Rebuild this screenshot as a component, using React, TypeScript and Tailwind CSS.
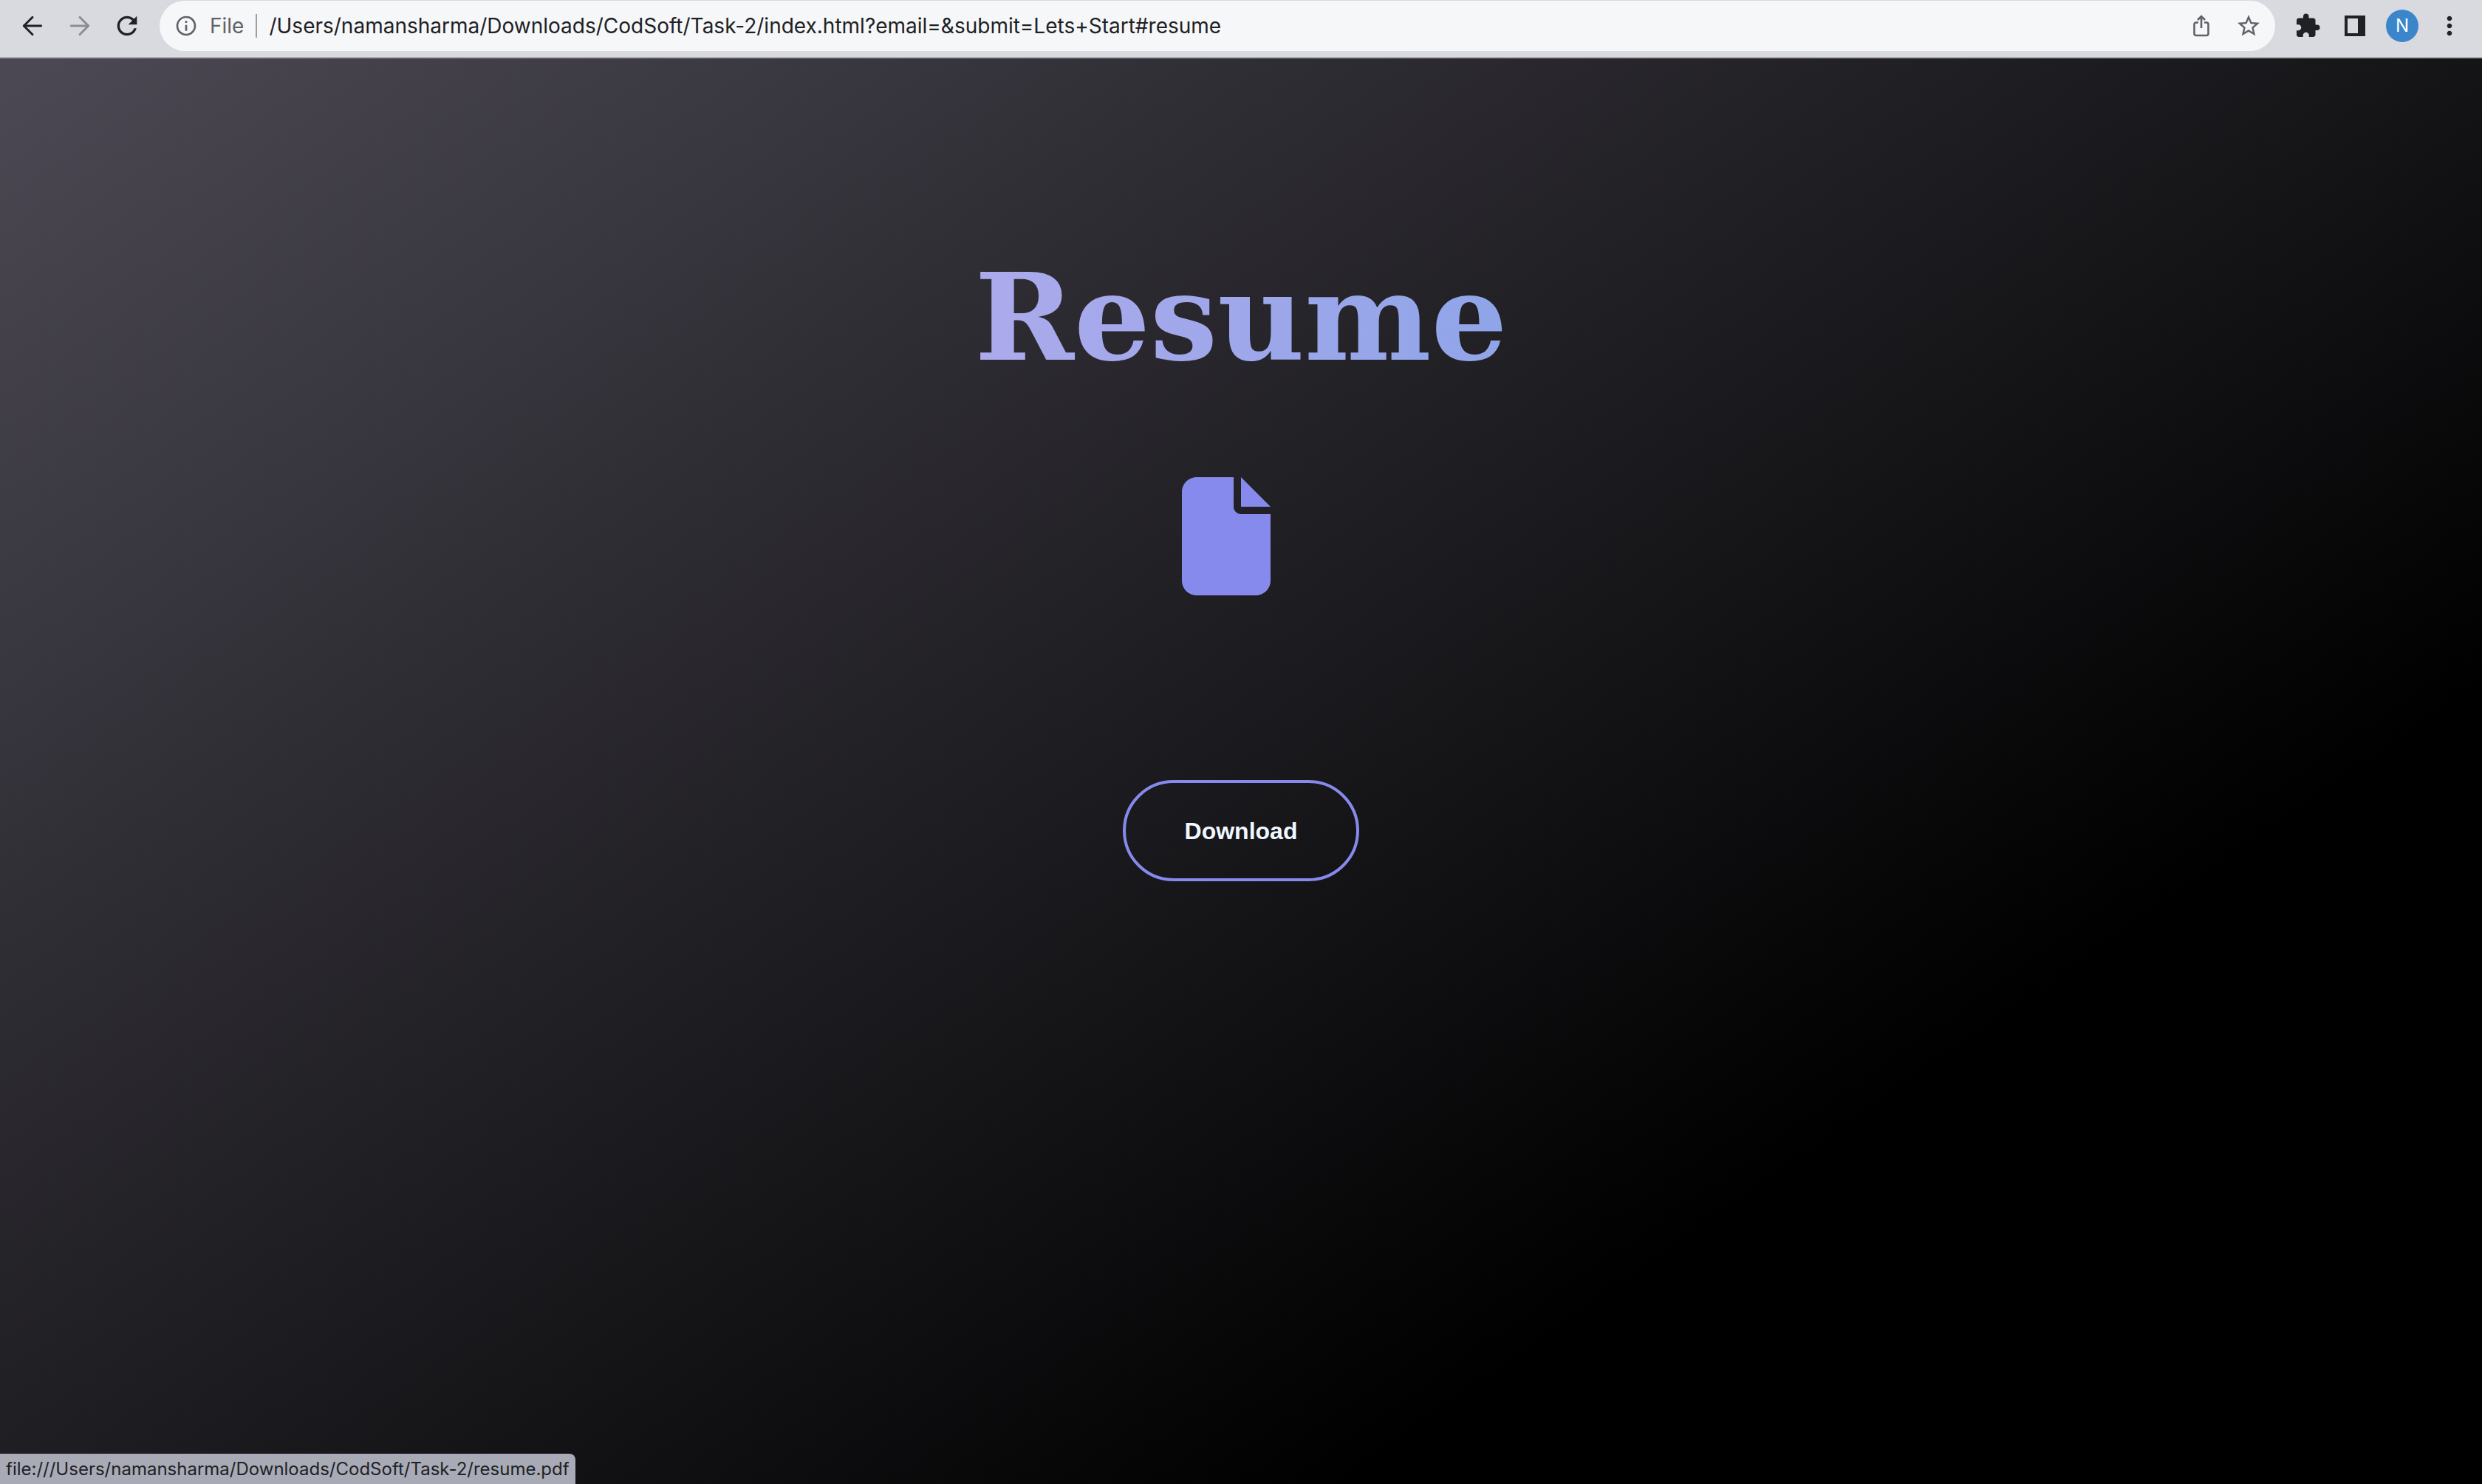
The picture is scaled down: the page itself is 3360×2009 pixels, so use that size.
import { ArrowLeft, ArrowRight } from "lucide-react";
import { MdRefresh, MdInfoOutline, MdStarOutline, MdExtension, MdMoreVert } from "react-icons/md";

const iconButton = "flex size-12 shrink-0 items-center justify-center rounded-full";

function ShareIcon() {
  return (
    <svg viewBox="0 0 24 30" className="h-[30px] w-6" fill="none" stroke="#5f6368" strokeWidth="2.6">
      <path d="M8 10.500H5Q2.500 10.500 2.500 13V25.500Q2.500 28 5 28H19Q21.500 28 21.500 25.500V13Q21.500 10.500 19 10.500H16M12 18V2M7 7L12 2L17 7" />
    </svg>
  );
}

function SidePanelIcon() {
  return (
    <svg viewBox="0 0 28 28" className="size-7">
      <path fill="#202124" fillRule="evenodd" d="M0 0H28V28H0ZM4 4V24H18V4Z" />
    </svg>
  );
}

function Toolbar() {
  return (
    <header className="flex h-[79px] shrink-0 items-start border-b-2 border-[#ababaf] bg-[#d9dadf] pr-5 text-[#202124]">
      <nav className="flex h-[70px] items-center gap-4 pr-5 pl-5">
        <button aria-label="Back" className={iconButton}>
          <ArrowLeft className="size-10" strokeWidth={1.75} />
        </button>
        <button aria-label="Forward" className={`${iconButton} text-[#8d8d91]`}>
          <ArrowRight className="size-10" strokeWidth={1.75} />
        </button>
        <button aria-label="Reload" className={iconButton}>
          <MdRefresh className="size-10" />
        </button>
      </nav>
      <div className="mt-px flex h-[68px] min-w-0 flex-1 items-center rounded-full bg-[#f6f7f9] pr-3 pl-5">
        <MdInfoOutline className="size-8 shrink-0 text-[#5f6368]" />
        <span className="ml-4 text-[28px] text-[#5f6368]">File</span>
        <span className="mr-4 ml-4 h-8 w-0.5 bg-[#9c9ea2]" />
        <input
          aria-label="Address"
          className="min-w-0 flex-1 bg-transparent text-[28px] outline-none"
          defaultValue="/Users/namansharma/Downloads/CodSoft/Task-2/index.html?email=&submit=Lets+Start#resume"
        />
        <div className="flex gap-4">
          <button aria-label="Share" className={iconButton}>
            <ShareIcon />
          </button>
          <button aria-label="Bookmark" className={iconButton}>
            <MdStarOutline className="size-9 text-[#5f6368]" />
          </button>
        </div>
      </div>
      <div className="ml-5 flex h-[70px] items-center gap-4">
        <button aria-label="Extensions" className={iconButton}>
          <MdExtension className="size-9" />
        </button>
        <button aria-label="Side panel" className={iconButton}>
          <SidePanelIcon />
        </button>
        <button aria-label="Profile" className={iconButton}>
          <span className="flex size-11 items-center justify-center rounded-full bg-[#3b86cb] text-2xl text-white">N</span>
        </button>
        <button aria-label="Menu" className={iconButton}>
          <MdMoreVert className="size-10" />
        </button>
      </div>
    </header>
  );
}

function FileIcon() {
  return (
    <svg viewBox="0 0 384 512" className="h-40 w-[120px]" fill="#868aed">
      <path d="M0 64C0 28.700 28.700 0 64 0H224V128c0 17.700 14.300 32 32 32H384V448c0 35.300-28.700 64-64 64H64c-35.300 0-64-28.700-64-64V64zm384 64H256V0L384 128z" />
    </svg>
  );
}

export default function App() {
  return (
    <div className="flex min-h-screen flex-col font-[Inter,sans-serif]">
      <Toolbar />
      <main className="relative flex flex-1 flex-col items-center bg-[linear-gradient(145deg,#4c4954,#000_75%)] pt-[251px]">
        <h1 className="bg-[linear-gradient(90deg,#acaaec,#8fa5e8)] bg-clip-text font-['DejaVu_Serif',serif] text-[162px] leading-[200px] font-bold text-transparent">
          Resume
        </h1>
        <div className="mt-[116px] mr-10">
          <FileIcon />
        </div>
        <a
          href="#resume"
          className="mt-[250px] flex h-[137px] w-80 items-center justify-center rounded-full border-4 border-[#868aed] font-['Liberation_Sans',sans-serif] text-[32px] font-bold text-[#f0f8ff]"
        >
          Download
        </a>
        <div className="absolute bottom-0 left-0 flex h-[41px] items-center rounded-tr-lg bg-[#a8aab6] px-2 text-2xl text-[#202124]">
          file:///Users/namansharma/Downloads/CodSoft/Task-2/resume.pdf
        </div>
      </main>
    </div>
  );
}
